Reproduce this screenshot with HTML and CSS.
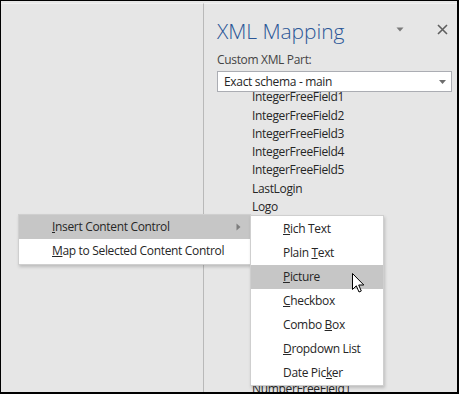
FILE: index.html
```html
<!DOCTYPE html>
<html>
<head>
<meta charset="utf-8">
<title>XML Mapping</title>
<link rel="stylesheet" href="styles.css">
</head>
<body>
<div class="frame">
  <div class="doc"></div>
  <div class="pane">
    <div class="pane-head">
      <h1 class="title">XML Mapping</h1>
      <svg class="pin" width="8" height="5" viewBox="0 0 8 5"><path d="M0.5 0.5 H7.5 L4 4.5 Z" fill="#7a7a7a"/></svg>
      <svg class="close" width="11" height="11" viewBox="0 0 11 11"><path d="M1 1 L10 10 M10 1 L1 10" stroke="#5f5f5f" stroke-width="1.6"/></svg>
    </div>
    <div class="label">Custom XML Part:</div>
    <div class="combo">
      <span class="combo-text">Exact schema - main</span>
      <svg class="combo-arrow" width="7" height="4" viewBox="0 0 7 4"><path d="M0 0 H7 L3.5 4 Z" fill="#6d6d6d"/></svg>
    </div>
    <div class="tree">
      <ul class="nodes">
        <li>IntegerFreeField1</li>
        <li>IntegerFreeField2</li>
        <li>IntegerFreeField3</li>
        <li>IntegerFreeField4</li>
        <li>IntegerFreeField5</li>
        <li>LastLogin</li>
        <li>Logo</li>
        <li class="covered"></li>
        <li class="covered"></li>
        <li class="covered"></li>
        <li class="covered"></li>
        <li class="covered"></li>
        <li class="covered"></li>
        <li class="covered"></li>
        <li class="covered"></li>
        <li class="covered"></li>
        <li>NumberFreeField1</li>
      </ul>
    </div>
  </div>

  <div class="menu main-menu">
    <div class="item active"><span><u>I</u>nsert Content Control</span>
      <svg class="sub-arrow" width="5" height="8" viewBox="0 0 5 8"><path d="M0.5 0.5 V7.5 L4.5 4 Z" fill="#7c7c7c"/></svg>
    </div>
    <div class="item"><span><u>M</u>ap to Selected Content Control</span></div>
  </div>

  <div class="menu sub-menu">
    <div class="item"><span><u>R</u>ich Text</span></div>
    <div class="item"><span>Plain <u>T</u>ext</span></div>
    <div class="item active"><span><u>P</u>icture</span></div>
    <div class="item"><span><u>C</u>heckbox</span></div>
    <div class="item"><span>Combo <u>B</u>ox</span></div>
    <div class="item"><span><u>D</u>ropdown List</span></div>
    <div class="item"><span>Date Pic<u>k</u>er</span></div>
  </div>

  <svg class="cursor" width="13" height="20" viewBox="0 0 13 20"><path d="M0.5 0.5 V16.5 L4.3 12.8 L7 19 L9.3 18 L6.7 12 H11.8 Z" fill="#ffffff" stroke="#000000" stroke-width="1" stroke-linejoin="miter"/></svg>
</div>
</body>
</html>
```

FILE: styles.css
```css
* { box-sizing: border-box; }
html, body { margin: 0; padding: 0; }
body {
  width: 459px;
  height: 394px;
  overflow: hidden;
  font-family: "Open Sans", "Noto Sans", "Liberation Sans", sans-serif;
  font-size: 12px;
  letter-spacing: -0.33px;
  color: #262626;
}
.frame {
  position: relative;
  width: 459px;
  height: 394px;
  border-style: solid;
  border-color: #000;
  border-width: 1px 2px 2px 1px;
  background: #e6e6e6;
  display: flex;
  overflow: hidden;
}
.doc {
  width: 203px;
  flex: none;
  margin-top: 2px;
  border-top: 1px solid #f1f1f1;
  border-right: 1px solid #b9b9b9;
}
.pane {
  flex: 1;
  margin-top: 2px;
  border-top: 1px solid #f1f1f1;
  padding: 14px 5px 0 13px;
  display: flex;
  flex-direction: column;
  min-width: 0;
}
.pane-head {
  display: flex;
  align-items: flex-start;
  height: 26px;
}
.title {
  margin: 0;
  font-family: "Open Sans", "Noto Sans", sans-serif;
  font-weight: 300;
  font-size: 21px;
  line-height: 26px;
  color: #2b5797;
  letter-spacing: -0.05px;
  flex: 1;
}
.pin { margin-top: 9px; margin-right: 33px; }
.close { margin-top: 6px; margin-right: 4px; }
.label {
  margin-top: 8px;
  line-height: 16px;
  color: #444;
}
.combo {
  margin-top: 3px;
  height: 21px;
  width: 235px;
  background: #fff;
  border: 1px solid #abadb3;
  display: flex;
  align-items: center;
  padding: 0 5px 0 6px;
}
.combo-text { flex: 1; line-height: 19px; color: #262626; }
.combo-arrow { flex: none; }
.tree {
  flex: 1;
  overflow: hidden;
  padding-left: 35px;
}
.nodes {
  list-style: none;
  margin: -3.6px 0 0 0;
  padding: 0;
}
.nodes li {
  line-height: 18.25px;
  height: 18.25px;
  white-space: nowrap;
  color: #262626;
}
.menu {
  position: absolute;
  background: #fff;
  border: 1px solid #cfcfcf;
  box-shadow: 1px 2px 3px rgba(0,0,0,0.18);
}
.menu .item {
  height: 24px;
  display: flex;
  align-items: center;
  white-space: nowrap;
  color: #262626;
}
.menu .item span { flex: 1; line-height: 24px; }
.menu .item.active { background: #c6c6c6; }
.main-menu {
  left: 17px;
  top: 213px;
  width: 233px;
  padding-bottom: 1px;
}
.main-menu .item { padding: 0 9px 0 33px; }
.sub-arrow { flex: none; }
.sub-menu {
  left: 249px;
  top: 214px;
  width: 134px;
  padding: 1px 0 0 0;
}
.sub-menu .item { padding-left: 32px; }
.cursor {
  position: absolute;
  left: 351px;
  top: 272px;
}
```
